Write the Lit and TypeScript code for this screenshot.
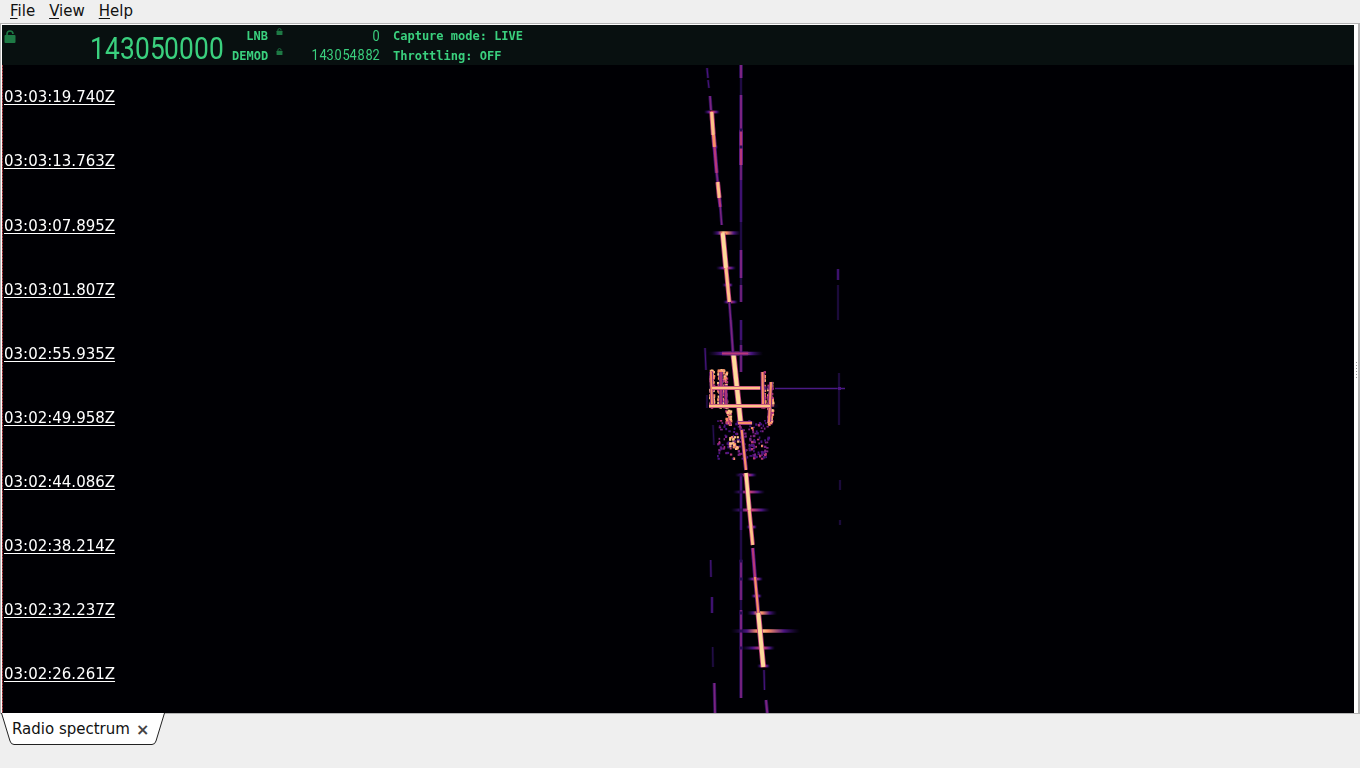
import { LitElement, html, css, svg } from "lit";
import { customElement } from "lit/decorators.js";

const STAMPS = ["03:03:19.740Z","03:03:13.763Z","03:03:07.895Z","03:03:01.807Z","03:02:55.935Z","03:02:49.958Z","03:02:44.086Z","03:02:38.214Z","03:02:32.237Z","03:02:26.261Z"];
const C = { dim:"#2a0f55", deep:"#4a1480", purple:"#7b2382", mag:"#b73779", red:"#e9585f", orange:"#fb8f67", peach:"#fec287", cream:"#fed99a" };
const GLOW: Record<string,string> = { cream:C.mag, peach:C.mag, orange:C.purple, red:C.purple, mag:C.deep, purple:C.dim, deep:"#180a35", dim:"#0c0620" };

type Seg = [number,number,number,number,number,keyof typeof C];
const SEGS: Seg[] = [
  [741,65,741,302,1.4,"dim"],[741,320,741,372,1.4,"dim"],[741,475,741,698,1.4,"dim"],
  [707,68,708,78,1.2,"deep"],[708,80,709,88,1,"deep"],[710,96,711,110,1.8,"purple"],
  [711.7,112,713.3,135,3.2,"peach"],[713.5,135,714.5,147,3,"orange"],[714.5,147,716.7,173,2.4,"mag"],[716.7,173,717.7,182,1.8,"purple"],
  [717.7,182,719.3,198,3,"peach"],[719.3,198,720.3,207,2.2,"mag"],[720.3,207,721.7,225,1.5,"purple"],
  [722.7,233,726,268,4,"cream"],[726,268,729.3,302,3,"peach"],[729.3,302,730.7,320,1.5,"purple"],
  [730.7,320,733,353,1.8,"purple"],[733.3,353,740.7,423,4.2,"cream"],[741.7,430,746,470,2.2,"orange"],
  [746,473,749.3,510,3.4,"cream"],[749.3,510,752.7,545,2.8,"peach"],[752.7,548,755,577,2.2,"mag"],
  [755,577,758.3,613,2.2,"orange"],[758.3,613,763.3,667,4,"cream"],[764,670,764.5,690,1,"deep"],[766,700,767.3,713,2,"purple"],
  [741,65,741,78,2.2,"purple"],[741,95,741,130,2,"purple"],[741,130,741,165,2.4,"mag"],
  [741,165,741,180,1.6,"purple"],[741,180,741,222,1.6,"deep"],[741,250,741,278,2,"purple"],
  [741,285,741,302,1.6,"purple"],[741,320,741,340,1.6,"deep"],[741,345,741,372,1.6,"purple"],
  [741,475,741,530,1.8,"deep"],[741,560,741,600,1.8,"purple"],[741,610,741,650,2,"purple"],[741,650,741,698,1.8,"purple"],
  [710.7,560,711,577,1,"deep"],[712,597,712,613,1.6,"deep"],[712.7,647,713,667,1,"dim"],[714.3,683,715,713,1.8,"purple"],
  [838,269,838,280,1.5,"deep"],[838,285,838,320,1,"dim"],[839,373,839,425,1,"dim"],[840,480,840,490,1,"dim"],[840,520,840,525,1,"dim"],
  [705,348,706,370,1,"deep"],[707,395,707,408,1,"dim"],[713,425,714,445,1,"dim"],
  [711,372,712,408,2,"orange"],[721,372,721,408,1.8,"mag"],[726,385,726,406,1.8,"mag"],[762.5,372,763,406,2.2,"orange"],[771,382,769,422,2.2,"orange"],
  [712,388,760,388,2.6,"peach"],[709,406,770,406,2.6,"peach"],[722,353.5,748,353.5,2.2,"mag"],[738,423,752,423,2.4,"orange"],
];
type Bar = [number,number,number,number,number];
const BARS: Bar[] = [
  [112,704,720,711.7,.55],[147,712,718,714.5,.3],[233,712,741,723,1],[268,716,736,726,.6],[285,722,733,728,.45],[302,723,738,729.3,.55],
  [353.5,708,763,733,.85],[388,712,775,740,1],[406,708,779,738,1],[423,735,755,741,.8],
  [475,735,757,746,.5],[492,733,765,747.5,.55],[510,731,770,749.3,.65],[527,746,757,751,.3],[579,747,763,755,.4],[596,751,762,756,.35],
  [613,747,777,758.3,.8],[631,731,800,760,1],[648,741,775,762,.7],[666,757,770,763.3,.5],
];

function draw(g: CanvasRenderingContext2D) {
  g.fillStyle = "#000004"; g.fillRect(0,0,1352,648);
  g.save(); g.translate(-2,-65);
  g.lineCap = "butt";
  const line = (a:number,b:number,c:number,d:number,w:number,col:string) => { g.strokeStyle=col; g.lineWidth=w; g.beginPath(); g.moveTo(a,b); g.lineTo(c,d); g.stroke(); };
  line(775,388.5,845,388.5,1.4,"#4a1a85");
  let s = 7; const rnd = () => (s = (s*16807)%2147483647)/2147483647;
  for (let i=0;i<170;i++) {
    const x = 717+rnd()*51, y = 420+rnd()*38; const r = rnd();
    const col = r<.5?C.deep:r<.82?C.purple:r<.96?C.mag:C.orange;
    g.fillStyle = col; g.fillRect(x,y,1.5+rnd()*1.2,1.5+rnd()*1.2);
  }
  for (let i=0;i<24;i++) { g.fillStyle = rnd()<.5?C.peach:C.orange; g.fillRect(729+rnd()*9,436+rnd()*12,2.2,2.2); }
  const blocks:[number,number,number,number][] = [[710,370,4,38],[718,370,9,38],[762,372,3,36],[768,382,5,43],[726,410,5,15]];
  for (const [x,y,w,h] of blocks) for (let i=0;i<w*h*.45;i++) {
    const r = rnd(); g.fillStyle = r<.35?C.mag:r<.7?C.orange:C.peach;
    g.fillRect(x+rnd()*w-1,y+rnd()*h-1,2.4,2.4);
  }
  for (const [y,a,b,c,k] of BARS) {
    const gr = g.createLinearGradient(a,0,b,0); const p=(c-a)/(b-a);
    gr.addColorStop(0,"rgba(40,12,90,0)");
    gr.addColorStop(Math.max(0,p*.55),"#4a1480");
    gr.addColorStop(Math.max(0,p*.9),k>.7?"#fb8f67":"#b73779");
    gr.addColorStop(p,k>.7?"#fed99a":"#e9585f");
    gr.addColorStop(Math.min(1,p+(1-p)*.2),k>.7?"#fb8f67":"#b73779");
    gr.addColorStop(Math.min(1,p+(1-p)*.6),"#4a1480");
    gr.addColorStop(1,"rgba(40,12,90,0)");
    g.strokeStyle=gr; g.lineWidth=k>.7?3.4:2.8; g.beginPath(); g.moveTo(a,y); g.lineTo(b,y); g.stroke();
  }
  for (const [a,b,c,d,w,k] of SEGS) { line(a,b,c,d,w+1.6,GLOW[k]); line(a,b,c,d,w,C[k]); }
  for (const y of [130,147,475,492,510,561,579,613,631,648]) { g.fillStyle="#2a0f55"; g.fillRect(739.5,y-1.5,3,3); }
  g.fillStyle="#4a1480"; g.fillRect(838,387,3,3);
  g.restore();
}

const lock = (w:number,h:number) => svg`<svg width=${w} height=${h} viewBox="0 0 12 13"><path d="M3 6V4a3 3 0 0 1 6 0" fill="none" stroke="#1e7a45" stroke-width="1.6"/><rect x="0.5" y="5" width="11" height="8" rx="1" fill="#1e7a45"/></svg>`;

function lcd(text:string, cls:string) {
  return html`<span class="lcd ${cls}">${[...text].map(c => c==="." ? html`<span class="dot">.</span>` : html`<span class="dig">${c}</span>`)}</span>`;
}

@customElement("app-root")
export class AppRoot extends LitElement {
  static styles = css`
    :host { display:flex; flex-direction:column; width:1360px; height:768px; background:#efefef; font-family:"DejaVu Sans",sans-serif; font-size:15px; color:#111; overflow:hidden; }
    .menu { display:flex; gap:14px; height:21px; padding-left:10px; align-items:center; box-sizing:border-box; flex:none; margin-bottom:2px; }
    .menu u { text-decoration-thickness:1px; text-underline-offset:2px; }
    .frame { flex:none; height:690px; box-sizing:border-box; border:1px solid #b4b4b4; border-bottom:none; border-right-width:2px; background:#fff; padding:1px 4px 0 1px; position:relative; }
    .view { display:flex; flex-direction:column; height:100%; position:relative; background:#000004; overflow:hidden; }
    .head { flex:none; height:40px; background:#081010; display:flex; color:#3ad07e; font:bold 12px "DejaVu Sans Mono",monospace; position:relative; z-index:1; }
    .biglock { flex:none; width:87px; padding:5px 0 0 2px; box-sizing:border-box; line-height:0; }
    .freq { flex:none; width:135px; padding-top:9px; line-height:30px; }
    .grid { display:grid; grid-template-columns:36px 8px 104px 104px; grid-auto-rows:20px; align-items:center; padding:1px 0 0 8px; }
    .lbl { text-align:right; }
    .lk { line-height:0; padding-left:8px; position:relative; top:-5px; }
    .val { text-align:right; font-weight:normal; line-height:20px; }
    .st { padding-left:13px; white-space:pre; }
    .lcd { display:inline-flex; align-items:baseline; color:#3ad07e; font-family:Roboto,sans-serif; font-weight:400; }
    .dig { display:inline-block; text-align:center; }
    .dot { display:inline-block; width:0; overflow:visible; }
    .big { font-size:31px; }
    .big .dig { width:14.9px; transform:scaleX(.85); }
    .big .dot { font-size:11px; }
    .small { font-size:15px; }
    .small .dig { width:7.7px; transform:scaleX(.85); }
    .small .dot { font-size:8px; }
    canvas { display:block; flex:1; width:1352px; height:648px; filter:blur(0.55px); }
    .edge { position:absolute; left:0; top:40px; bottom:0; width:1px; background:repeating-linear-gradient(#a33a40 0 2px,#5a2025 2px 3px); }
    .stamps { position:absolute; left:2px; top:63.32px; display:grid; grid-auto-rows:64.11px; color:#fff; font-size:15px; }
    .stamps span { text-decoration:underline; text-underline-offset:2px; }
    .grip { position:absolute; right:1px; top:338px; width:1px; height:16px; background:repeating-linear-gradient(#9a9a9a 0 1px,transparent 1px 3px); }
    .tabs { flex:1; position:relative; }
    .topline { position:absolute; left:0; right:0; top:0; height:1px; background:#b4b4b4; }
    .tab { position:relative; display:flex; align-items:center; width:165px; height:32px; box-sizing:border-box; padding:0 0 0 12px; gap:6px; font-size:15px; }
    .tab svg { position:absolute; left:0; top:0; }
    .tab span { position:relative; }
    .x { font-size:16px; color:#444; font-weight:bold; }
  `;
  firstUpdated() {
    const c = this.renderRoot.querySelector("canvas") as HTMLCanvasElement;
    draw(c.getContext("2d")!);
  }
  render() {
    return html`
      <div class="menu"><span><u>F</u>ile</span><span><u>V</u>iew</span><span><u>H</u>elp</span></div>
      <div class="frame">
        <div class="view">
          <div class="head">
            <div class="biglock">${lock(12,13)}</div>
            <div class="freq">${lcd("143.050.000","big")}</div>
            <div class="grid">
              <span class="lbl">LNB</span><span class="lk">${lock(7,7)}</span><span class="val">${lcd("0","small")}</span><span class="st">Capture mode: LIVE</span>
              <span class="lbl">DEMOD</span><span class="lk">${lock(7,7)}</span><span class="val">${lcd("143.054.882","small")}</span><span class="st">Throttling: OFF</span>
            </div>
          </div>
          <canvas width="1352" height="648"></canvas>
          <div class="edge"></div>
          <div class="stamps">${STAMPS.map(t => html`<div><span>${t}</span></div>`)}</div>
        </div>
        <div class="grip"></div>
      </div>
      <div class="tabs">
        <div class="topline"></div>
        <div class="tab">
          <svg width="166" height="33" viewBox="0 0 166 33"><path d="M1.5 0 L10 28 Q11 31.5 14 31.5 L152 31.5 Q155 31.5 156 28 L164.5 0" fill="#fff" stroke="#222" stroke-width="1"/></svg>
          <span>Radio spectrum</span><span class="x">×</span>
        </div>
      </div>`;
  }
}
